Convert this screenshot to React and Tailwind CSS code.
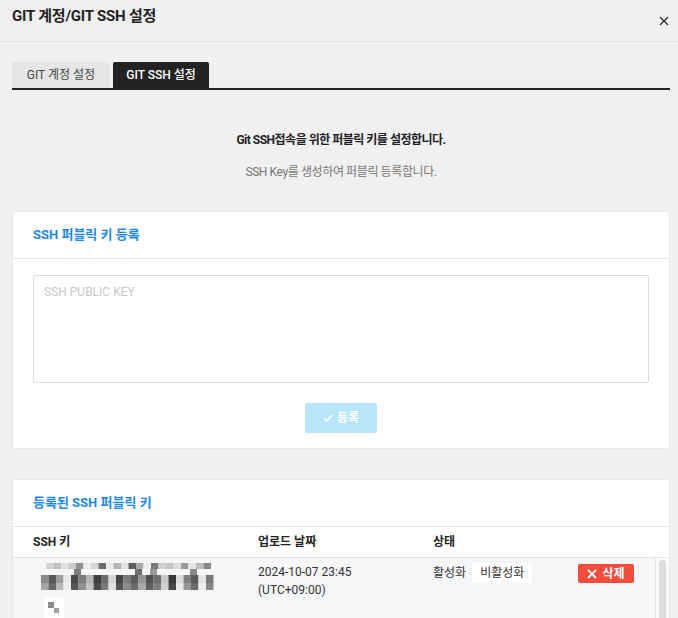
import React from "react";

const font = { fontFamily: 'Roboto, "Noto Sans CJK KR", "Noto Sans", sans-serif' };

function Mosaic() {
  const row1 = [
    "#d4d4d4", "#c0c0c0", "#e2e2e2", "#cacaca", "#8f8f8f", "#ededed", "#d6d6d6", "#6f6f6f", "#eaeaea", "#b4b4b4",
    "#e4e4e4", "#5e5e5e", "#aaaaaa", "#eeeeee", "#7a7a7a", "#d2d2d2", "#c6c6c6", "#dddddd", "#9a9a9a", "#e6e6e6",
    "#bdbdbd", "#888888",
  ];
  const row2 = [
    "#8a8a8a", "#5a5a5a", "#9e9e9e", "#e7e7e7", "#4a4a4a", "#7c7c7c", "#b3b3b3", "#3d3d3d", "#6a6a6a", "#d6d6d6",
    "#444444", "#7a7a7a", "#5c5c5c", "#949494", "#4f4f4f", "#6e6e6e", "#c8c8c8", "#3a3a3a", "#dcdcdc", "#808080",
    "#595959", "#e4e4e4", "#777777",
  ];
  const row2b = [
    "#a5a5a5", "#6a6a6a", "#b8b8b8", "#eeeeee", "#555555", "#909090", "#c3c3c3", "#4a4a4a", "#7b7b7b", "#e0e0e0",
    "#565656", "#8a8a8a", "#6c6c6c", "#a8a8a8", "#606060", "#7e7e7e", "#d2d2d2", "#474747", "#e8e8e8", "#969696",
    "#6a6a6a", "#eeeeee", "#888888",
  ];
  return (
    <svg width="180" height="62" viewBox="0 0 180 62" className="block">
      {row1.map((c, i) => (
        <rect key={"a" + i} x={6 + i * 7.5} y={4} width={7.5} height={6} fill={c} />
      ))}
      {[[34, "#7f7f7f"], [95, "#6c6c6c"], [110, "#999999"], [150, "#8a8a8a"]].map(([x, c], i) => (
        <rect key={"m" + i} x={x} y={10} width={7} height={6} fill={c} />
      ))}
      {row2.map((c, i) => (
        <rect key={"b" + i} x={1 + i * 7.5} y={16} width={7.5} height={8} fill={c} />
      ))}
      {row2b.map((c, i) => (
        <rect key={"c" + i} x={1 + i * 7.5} y={24} width={7.5} height={7} fill={c} />
      ))}
      <rect x={4} y={38} width={20} height={24} fill="#ffffff" />
      <rect x={8} y={43} width={6} height={6} fill="#8c8c8c" />
      <rect x={14} y={49} width={5} height={5} fill="#a0a0a0" />
    </svg>
  );
}

export default function App() {
  return (
    <div className="w-[678px] h-[618px] overflow-hidden bg-[#f0f0f0] text-[#222]" style={font}>
      {/* Header */}
      <div className="h-[42px] border-b border-[#dddddd] flex items-center justify-between pl-3 pr-[9px]">
        <div className="text-[15px] font-bold text-[#222] -mt-[8px] tracking-[-0.2px]">GIT 계정/GIT SSH 설정</div>
        <svg width="10" height="10" viewBox="0 0 10 10" className="mt-[1px]">
          <path d="M1 1L9 9M9 1L1 9" stroke="#333" strokeWidth="1.4" />
        </svg>
      </div>

      {/* Tabs */}
      <div className="ml-3 mr-2 mt-[20px] flex gap-[3px] border-b-2 border-[#222]">
        <div className="w-[98px] h-[26px] bg-[#e6e6e6] text-[#444] text-[12px] flex items-center justify-center rounded-t-[2px]">
          GIT 계정 설정
        </div>
        <div className="w-[96px] h-[26px] bg-[#222222] text-white text-[12px] font-medium flex items-center justify-center rounded-t-[2px]">
          GIT SSH 설정
        </div>
      </div>

      {/* Intro */}
      <div className="text-center mt-[42px] pl-[4px]">
        <div className="text-[12px] font-bold text-[#222] leading-[16px] tracking-[-0.5px]">Git SSH접속을 위한 퍼블릭 키를 설정합니다.</div>
        <div className="text-[12px] text-[#777] leading-[16px] mt-[16px] tracking-[-0.4px]">SSH Key를 생성하여 퍼블릭 등록합니다.</div>
      </div>

      {/* Card 1 */}
      <div className="ml-3 mr-2 mt-[31px] bg-white rounded-[3px] border border-[#e8e8e8]">
        <div className="h-[47px] border-b border-[#e3e3e3] flex items-center px-5">
          <div className="text-[13px] font-bold text-[#1e88e5]">SSH 퍼블릭 키 등록</div>
        </div>
        <div className="px-5 pt-[16px] pb-[15px]">
          <div className="h-[108px] border border-[#dddddd] rounded-[2px] px-[10px] pt-[7px]">
            <div className="text-[12px] text-[#c8c8c8]">SSH PUBLIC KEY</div>
          </div>
          <div className="flex justify-center mt-[20px]">
            <div className="w-[72px] h-[30px] bg-[#b8e5f8] rounded-[2px] flex items-center justify-center gap-[4px] text-white text-[12px] font-bold">
              <svg width="10" height="8" viewBox="0 0 10 8">
                <path d="M1 4L3.8 7L9 1" stroke="#fff" strokeWidth="1.6" fill="none" />
              </svg>
              등록
            </div>
          </div>
        </div>
      </div>

      {/* Card 2 */}
      <div className="ml-3 mr-2 mt-[30px] bg-white rounded-[3px] border border-[#e8e8e8]">
        <div className="h-[47px] border-b border-[#e3e3e3] flex items-center px-5">
          <div className="text-[13px] font-bold text-[#1e88e5]">등록된 SSH 퍼블릭 키</div>
        </div>
        <div className="h-[31px] border-b border-[#e3e3e3] flex items-center text-[12px] font-bold text-[#222]">
          <div className="w-[245px] pl-5">SSH 키</div>
          <div className="w-[175px]">업로드 날짜</div>
          <div>상태</div>
        </div>
        <div className="flex h-[80px]">
          <div className="flex-1 bg-[#f5f6f8] flex">
            <div className="w-[245px] pl-[27px] pt-[1px]">
              <Mosaic />
            </div>
            <div className="w-[175px] pt-[5px] text-[12px] text-[#333] leading-[18px]">
              <div>2024-10-07 23:45</div>
              <div>(UTC+09:00)</div>
            </div>
            <div className="w-[145px] pt-[5px] flex items-start text-[12px] text-[#333]">
              <span className="leading-[20px]">활성화</span>
              <span className="ml-[6px] h-[20px] px-[8px] bg-white flex items-center">비활성화</span>
            </div>
            <div className="pt-[6px]">
              <div className="w-[56px] h-[19px] bg-[#f44c3c] rounded-[2px] flex items-center justify-center gap-[5px] text-white text-[12px] font-bold">
                <svg width="10" height="10" viewBox="0 0 10 10">
                  <path d="M1 1L9 9M9 1L1 9" stroke="#fff" strokeWidth="1.8" />
                </svg>
                삭제
              </div>
            </div>
          </div>
          <div className="w-[14px] border-l border-[#e3e3e3] bg-[#fafafa] flex justify-center pt-[2px]">
            <div className="w-[7px] h-[80px] bg-[#dddddd] rounded-full" />
          </div>
        </div>
      </div>
    </div>
  );
}
